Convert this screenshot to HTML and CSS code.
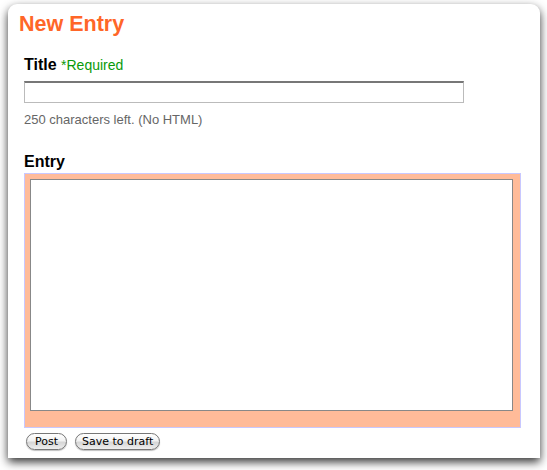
FILE: index.html
```html
<!DOCTYPE html>
<html lang="en">
  <head>
    <meta charset="UTF-8" />
    <title>New Entry</title>
    <link rel="stylesheet" href="styles.css">
  </head>
  <body>
    <section class="panel">
      <h1 class="panel__title">New Entry</h1>

      <div class="field">
        <label class="field__label" for="title">Title <span class="field__req">*Required</span></label>
        <input type="text" id="title" class="field__input" />
        <p class="field__hint">250 characters left. (No HTML)</p>
      </div>

      <div class="field field--entry">
        <label class="field__label" for="entry">Entry</label>
        <div class="entry-wrap">
          <textarea id="entry" class="entry-wrap__text"></textarea>
        </div>
      </div>

      <div class="actions">
        <button class="btn">Post</button>
        <button class="btn btn--wide">Save to draft</button>
      </div>
    </section>
  </body>
</html>
```

FILE: styles.css
```css
html {
  box-sizing: border-box;
}

*,
*::before,
*::after {
  margin: 0;
  padding: 0;
  box-sizing: inherit;
}

body {
  background: #fff;
  font-family: "Liberation Sans", Arial, sans-serif;
  padding: 4px 0 0 8px;
  min-height: 470px;
}

.panel {
  width: 532px;
  height: 454px;
  background: #fff;
  border-radius: 9px 9px 0 0;
  box-shadow: 0 4px 10px rgba(0, 0, 0, 0.8);
  padding: 8px 0 0 16px;
}

.panel__title {
  color: #ff6628;
  font-size: 21.5px;
  font-weight: bold;
  line-height: 24px;
  margin-left: -5px;
}

.field {
  margin-top: 19px;
}

.field__label {
  display: block;
  font-size: 16px;
  font-weight: bold;
  line-height: 20px;
  color: #000;
}

.field__req {
  color: #0a9a0a;
  font-size: 14px;
  font-weight: normal;
}

.field__input {
  display: block;
  margin-top: 6px;
  width: 440px;
  height: 22px;
  border: 1px solid #bbb;
  border-top: 2px solid #777;
  background: #fff;
}

.field__hint {
  margin-top: 9px;
  font-size: 13px;
  color: #666;
  line-height: 16px;
}

.field--entry {
  margin-top: 24px;
}

.entry-wrap {
  margin-top: 1px;
  width: 497px;
  height: 255px;
  background: #ffbb99;
  border: 1px solid #c8c8ff;
  padding: 5px 0 0 5px;
}

.entry-wrap__text {
  display: block;
  width: 483px;
  height: 232px;
  border: 1px solid #888;
  background: #fff;
  resize: none;
}

.actions {
  display: flex;
  gap: 8px;
  margin-top: 5px;
  padding-left: 2px;
}

.btn {
  font-family: "DejaVu Sans", sans-serif;
  font-size: 11px;
  height: 17px;
  padding: 0 8px;
  border: 1px solid #777;
  border-radius: 9px;
  background: linear-gradient(#fff 0%, #f2f2f2 45%, #d6d6d6 55%, #eee 100%);
  color: #000;
  box-shadow: 0 1px 1px rgba(0, 0, 0, 0.25);
}

.btn--wide {
  padding: 0 6px;
}
```
